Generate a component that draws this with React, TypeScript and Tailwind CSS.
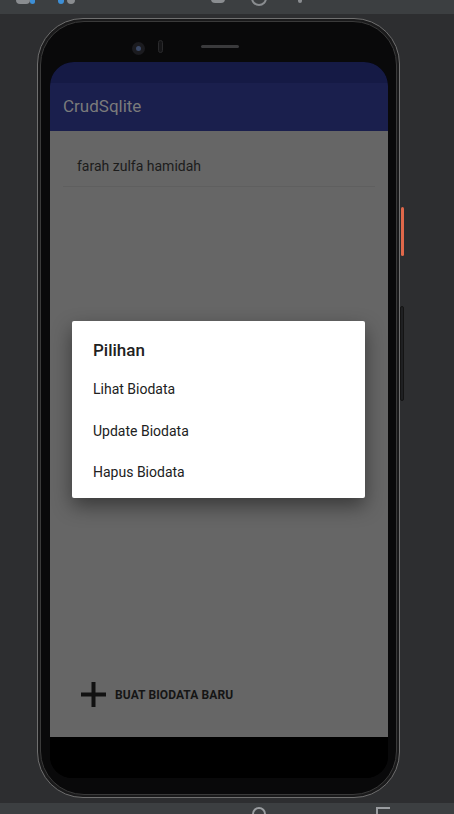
const options = ['Lihat Biodata', 'Update Biodata', 'Hapus Biodata'];

function TopBar() {
  return (
    <div className="relative h-[14px] bg-[#3c3f41] overflow-hidden">
      {/* icons cut off by the window edge */}
      <div className="absolute left-[16px] -top-[6px] w-[14px] h-[10px] rounded-sm bg-[#8a8d90]" />
      <div className="absolute left-[30px] -top-[6px] w-[5px] h-[10px] rounded-sm bg-[#3d8fd6]" />
      <div className="absolute left-[58px] -top-[6px] w-[6px] h-[10px] rounded-sm bg-[#3d8fd6]" />
      <div className="absolute left-[67px] -top-[6px] w-[8px] h-[10px] rounded-sm bg-[#8a8d90]" />
      <div className="absolute left-[211px] -top-[6px] w-[14px] h-[9px] rounded-sm bg-[#8a8d90]" />
      <div className="absolute left-[251px] -top-[10px] w-[16px] h-[16px] rounded-full border-2 border-[#8a8d90]" />
      <div className="absolute left-[298px] -top-[6px] w-[4px] h-[9px] rounded-full bg-[#8a8d90]" />
    </div>
  );
}

function BottomBar() {
  return (
    <div className="relative h-[11px] bg-[#3c3f41] overflow-hidden">
      <div className="absolute left-[252px] top-[4px] w-[14px] h-[14px] rounded-full border-2 border-[#9a9da0]" />
      <div className="absolute left-[376px] top-[4px] w-[14px] h-[12px] border-t-2 border-l-2 border-[#9a9da0]" />
    </div>
  );
}

function PlusIcon() {
  return (
    <svg width="25" height="25" viewBox="0 0 25 25" className="shrink-0">
      <rect x="10.5" y="0" width="4" height="25" fill="#111" />
      <rect x="0" y="10.5" width="25" height="4" fill="#111" />
    </svg>
  );
}

function Screen() {
  return (
    <div className="relative w-[338px] h-[716px] rounded-t-[24px] rounded-b-[22px] overflow-hidden bg-black flex flex-col font-['Roboto',sans-serif]">
      {/* status bar */}
      <div className="h-[21px] bg-[#151a45]" />
      {/* app bar */}
      <div className="h-[48px] bg-[#1a1f4d] flex items-center pl-[13px]">
        <span className="text-[17px] text-[#7b7b7b]">CrudSqlite</span>
      </div>
      {/* content */}
      <div className="h-[606px] bg-[#666666] flex flex-col">
        <div className="mx-[13px] h-[56px] border-b border-[#5f5f5f] flex items-center pl-[14px] pt-[15px]">
          <span className="text-[14px] text-[#1c1c1c]">farah zulfa hamidah</span>
        </div>
        <div className="flex-1" />
        <div className="flex items-center gap-[9px] pl-[31px] pb-[30px]">
          <PlusIcon />
          <span className="text-[12px] font-bold text-[#151515] tracking-[0.1px]">BUAT BIODATA BARU</span>
        </div>
      </div>
      {/* nav bar */}
      <div className="flex-1 bg-black" />

      {/* dialog */}
      <div className="absolute left-[22px] top-[259px] w-[293px] h-[177px] bg-white rounded-[2px] shadow-[0_8px_20px_rgba(0,0,0,0.45)] pt-[17px] px-[21px]">
        <div className="text-[17px] font-medium text-[#212121] leading-[24px]">Pilihan</div>
        <div className="mt-[17px] flex flex-col gap-[21.5px]">
          {options.map((o) => (
            <div key={o} className="text-[14px] text-[#212121] leading-[20px]">
              {o}
            </div>
          ))}
        </div>
      </div>
    </div>
  );
}

function Phone() {
  return (
    <div className="relative ml-[37px] mt-[4px] w-[363px] h-[780px]">
      {/* side buttons */}
      <div className="absolute -right-[4px] top-[189px] w-[3px] h-[49px] rounded-sm bg-[#e0684a]" />
      <div className="absolute -right-[4px] top-[288px] w-[4px] h-[95px] rounded-sm bg-[#1f2022] border border-[#141414]" />

      <div className="w-full h-full rounded-[46px] bg-[#1a1a1b] border border-[#6f6f6f] p-[2px]">
        <div className="relative w-full h-full rounded-[44px] bg-[#09090a] border border-[#3a3a3a] pl-[9px] pt-[40px]">
          {/* camera, sensor, speaker */}
          <div className="absolute left-[91px] top-[20px] w-[13px] h-[13px] rounded-full bg-[#1b1b1f] flex items-center justify-center">
            <div className="w-[5px] h-[5px] rounded-full bg-[#3a4866]" />
          </div>
          <div className="absolute left-[117px] top-[18px] w-[5px] h-[13px] rounded-full bg-[#151517] border border-[#2a2a2c]" />
          <div className="absolute left-[160px] top-[23px] w-[38px] h-[3px] rounded-full bg-[#3a3a3c]" />
          <Screen />
        </div>
      </div>
    </div>
  );
}

export default function App() {
  return (
    <div className="w-[454px] h-[814px] bg-[#2d2e30] flex flex-col overflow-hidden">
      <TopBar />
      <Phone />
      <div className="flex-1" />
      <BottomBar />
    </div>
  );
}
